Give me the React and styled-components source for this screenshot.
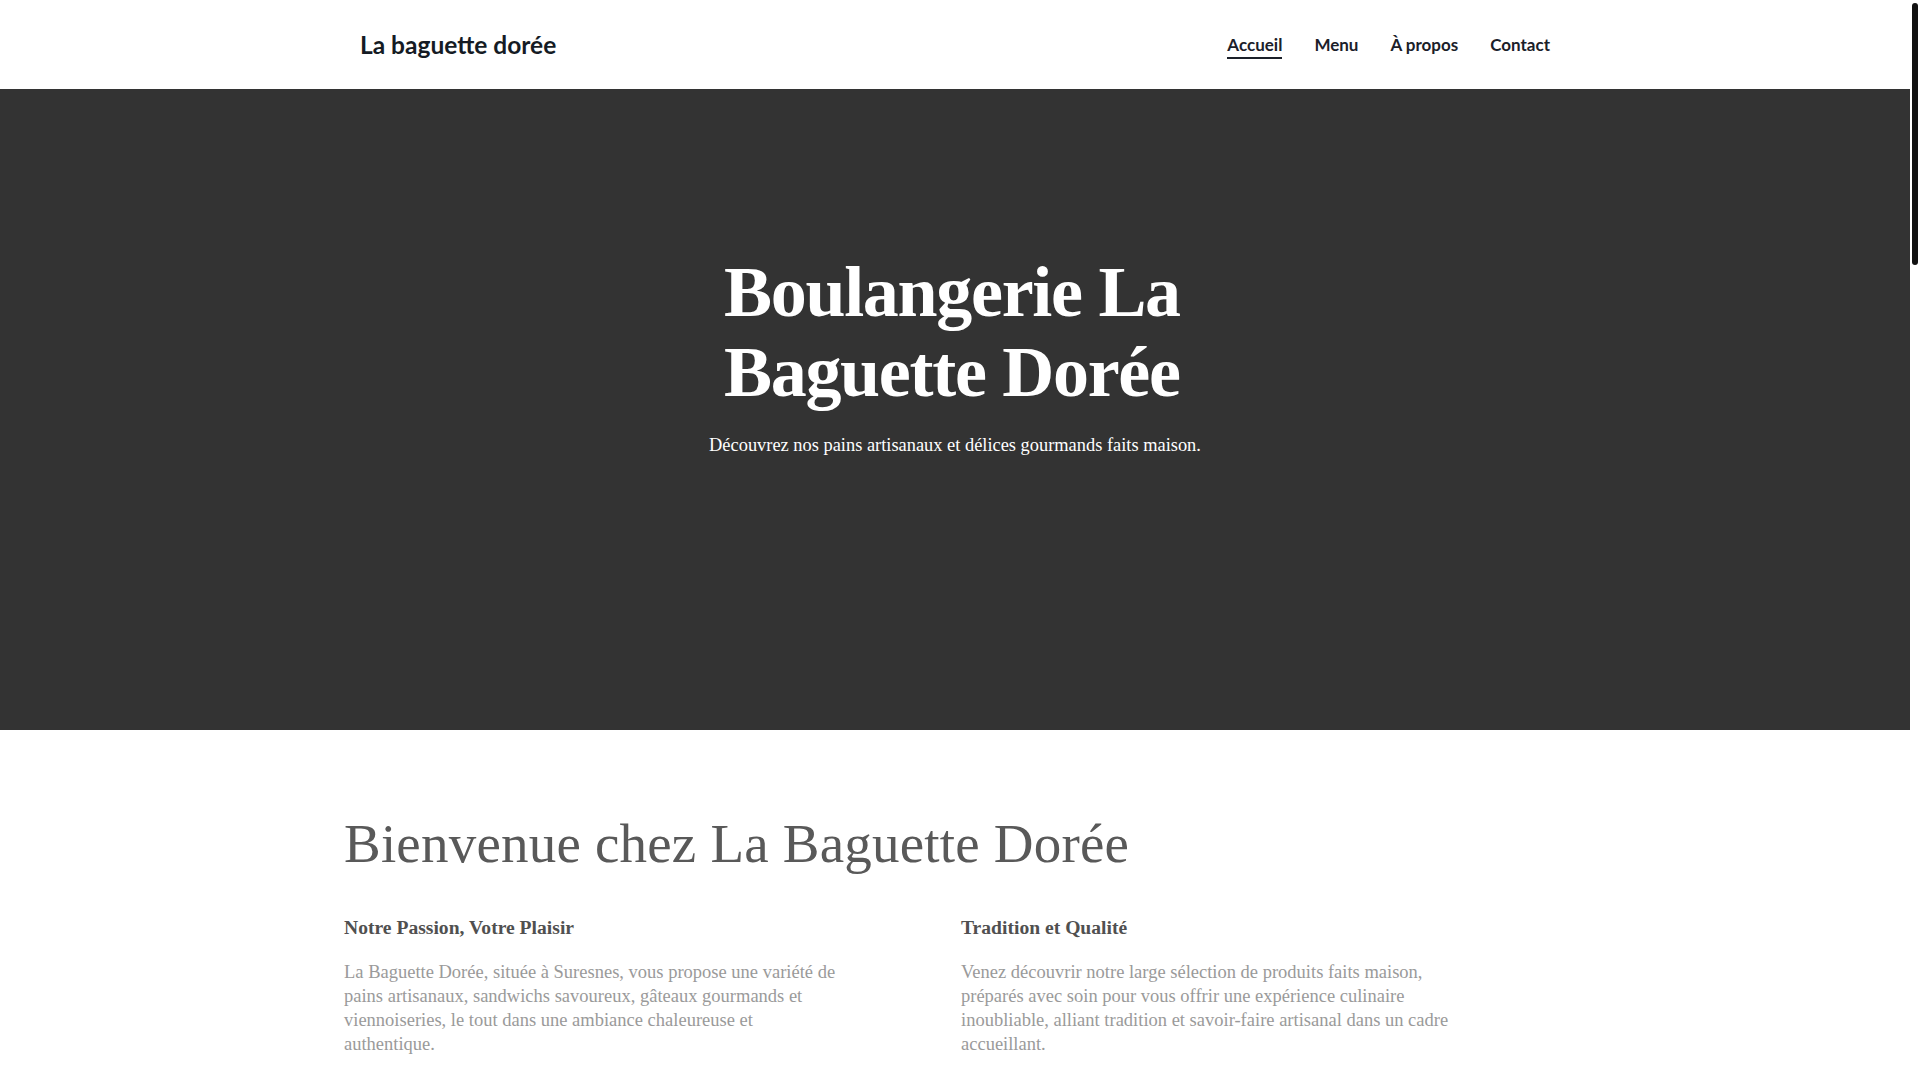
import React from 'react';
import styled, { createGlobalStyle } from 'styled-components';

const GlobalStyle = createGlobalStyle`
  * {
    box-sizing: border-box;
  }

  body {
    margin: 0 10px 0 0;
    background: #ffffff;
    font-family: 'Liberation Serif', 'Times New Roman', serif;
  }
`;

// the reference was taken with a visible overlay scrollbar
const ScrollThumb = styled.div`
  position: fixed;
  top: 3px;
  right: 2px;
  width: 6px;
  height: 262px;
  border-radius: 3px;
  background: #111111;
`;

const Page = styled.div`
  min-height: 4450px;
  display: flex;
  flex-direction: column;
`;

const Header = styled.header`
  height: 89px;
  background: #ffffff;
`;

const HeaderInner = styled.div`
  max-width: 1190px;
  height: 100%;
  margin: 0 auto;
  display: flex;
  align-items: center;
  justify-content: space-between;
`;

const Logo = styled.a`
  font-family: 'Lato', 'Liberation Sans', sans-serif;
  font-size: 24.5px;
  font-weight: 700;
  color: #151b24;
  text-decoration: none;
`;

const Nav = styled.nav`
  display: flex;
  align-items: center;
  gap: 32px;
  padding-top: 4px;
`;

const NavLink = styled.a`
  font-family: 'Lato', 'Liberation Sans', sans-serif;
  font-size: 17px;
  font-weight: 700;
  color: #1b2029;
  text-decoration: none;
  padding-bottom: 2px;
  border-bottom: 2px solid ${(p) => (p.$active ? '#1b2029' : 'transparent')};
`;

const Hero = styled.section`
  height: 641px;
  background: #333333;
  padding-top: 163px;
  display: flex;
  flex-direction: column;
  align-items: center;
`;

const HeroTitle = styled.h1`
  width: 462px;
  margin: 0;
  font-family: 'Liberation Serif', 'Times New Roman', serif;
  font-size: 72px;
  font-weight: 700;
  line-height: 80px;
  letter-spacing: -1.3px;
  color: #ffffff;
  text-align: left;
`;

const HeroText = styled.p`
  margin: 20px 0 0;
  font-size: 18.4px;
  line-height: 1.5;
  color: #ffffff;
  text-align: center;
`;

const Intro = styled.section`
  padding: 81px 0 0;
`;

const IntroInner = styled.div`
  max-width: 1222px;
  margin: 0 auto;
`;

const IntroTitle = styled.h2`
  margin: 0 0 38px;
  font-size: 55px;
  font-weight: 400;
  line-height: 1.2;
  letter-spacing: 0.2px;
  color: #595959;
`;

const Columns = styled.div`
  display: grid;
  grid-template-columns: 1fr 1fr;
  gap: 12px;
`;

const Column = styled.div`
  display: flex;
  flex-direction: column;
`;

const ColumnTitle = styled.h3`
  margin: 0 0 20px;
  font-size: 19.6px;
  font-weight: 700;
  line-height: 1.3;
  color: #505050;
`;

const ColumnText = styled.p`
  max-width: 499px;
  margin: 0;
  font-size: 18.5px;
  line-height: 24px;
  color: #9a9a9a;
`;

const links = ['Accueil', 'Menu', 'À propos', 'Contact'];

const blocks = [
  {
    title: 'Notre Passion, Votre Plaisir',
    text: 'La Baguette Dorée, située à Suresnes, vous propose une variété de pains artisanaux, sandwichs savoureux, gâteaux gourmands et viennoiseries, le tout dans une ambiance chaleureuse et authentique.',
  },
  {
    title: 'Tradition et Qualité',
    text: 'Venez découvrir notre large sélection de produits faits maison, préparés avec soin pour vous offrir une expérience culinaire inoubliable, alliant tradition et savoir-faire artisanal dans un cadre accueillant.',
  },
];

const App = () => {
  return (
    <>
      <GlobalStyle />
      <ScrollThumb />
      <Page>
        <Header>
          <HeaderInner>
            <Logo href="#">La baguette dorée</Logo>
            <Nav>
              {links.map((link, i) => (
                <NavLink key={link} href="#" $active={i === 0}>{link}</NavLink>
              ))}
            </Nav>
          </HeaderInner>
        </Header>

        <Hero>
          <HeroTitle>Boulangerie La Baguette Dorée</HeroTitle>
          <HeroText>Découvrez nos pains artisanaux et délices gourmands faits maison.</HeroText>
        </Hero>

        <Intro>
          <IntroInner>
            <IntroTitle>Bienvenue chez La Baguette Dorée</IntroTitle>
            <Columns>
              {blocks.map((block) => (
                <Column key={block.title}>
                  <ColumnTitle>{block.title}</ColumnTitle>
                  <ColumnText>{block.text}</ColumnText>
                </Column>
              ))}
            </Columns>
          </IntroInner>
        </Intro>
      </Page>
    </>
  );
};

export default App;
